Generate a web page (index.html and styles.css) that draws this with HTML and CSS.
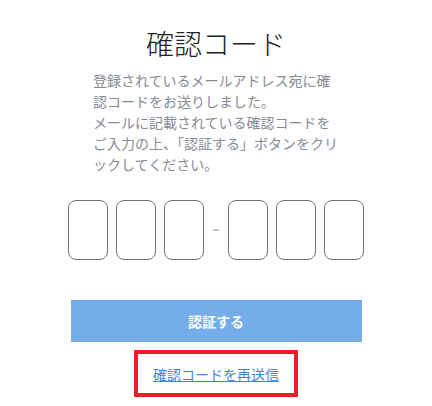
FILE: index.html
```html
<!DOCTYPE html>
<html lang="ja">
<head>
<meta charset="utf-8">
<title>確認コード</title>
<link rel="stylesheet" href="styles.css">
</head>
<body>
<main class="page">
  <h1 class="title">確認コード</h1>
  <p class="desc">登録されているメールアドレス宛に確認コードをお送りしました。<br>メールに記載されている確認コードをご入力の上、「認証する」ボタンをクリックしてください。</p>
  <div class="code">
    <span class="box"></span>
    <span class="box"></span>
    <span class="box"></span>
    <span class="dash"></span>
    <span class="box"></span>
    <span class="box"></span>
    <span class="box"></span>
  </div>
  <button class="submit" type="button">認証する</button>
  <div class="resend-frame">
    <a class="resend" href="#">確認コードを再送信</a>
  </div>
</main>
</body>
</html>
```

FILE: styles.css
```css
html, body {
  margin: 0;
  padding: 0;
  background: #ffffff;
}

body {
  font-family: "Noto Sans CJK JP", "Noto Sans", sans-serif;
}

.page {
  display: flex;
  flex-direction: column;
  align-items: center;
  padding-top: 23px;
}

.title {
  margin: 0;
  font-size: 28px;
  font-weight: 300;
  line-height: 40px;
  color: #222222;
}

.desc {
  width: 246px;
  margin: 7px 0 0 0;
  font-size: 14px;
  line-height: 21px;
  color: #868b95;
}

.code {
  display: flex;
  align-items: center;
  gap: 8px;
  margin-top: 25px;
}

.box {
  box-sizing: border-box;
  width: 40px;
  height: 60px;
  border: 1px solid #6c737b;
  border-radius: 8px;
}

.dash {
  width: 8px;
  display: flex;
  justify-content: center;
}

.dash::before {
  content: "";
  width: 6px;
  height: 2px;
  background: #c6cbd3;
}

.submit {
  margin-top: 40px;
  width: 291px;
  height: 42px;
  border: none;
  background: #75adeb;
  color: #ffffff;
  font-family: inherit;
  font-size: 14px;
  font-weight: 700;
  padding: 0;
}

.resend-frame {
  box-sizing: border-box;
  margin-top: 8px;
  width: 164px;
  height: 47px;
  border: 4px solid #ee1c25;
  display: flex;
  align-items: center;
  justify-content: center;
}

.resend {
  font-size: 14px;
  line-height: 20px;
  color: #3d85de;
  text-decoration: underline;
}
```
